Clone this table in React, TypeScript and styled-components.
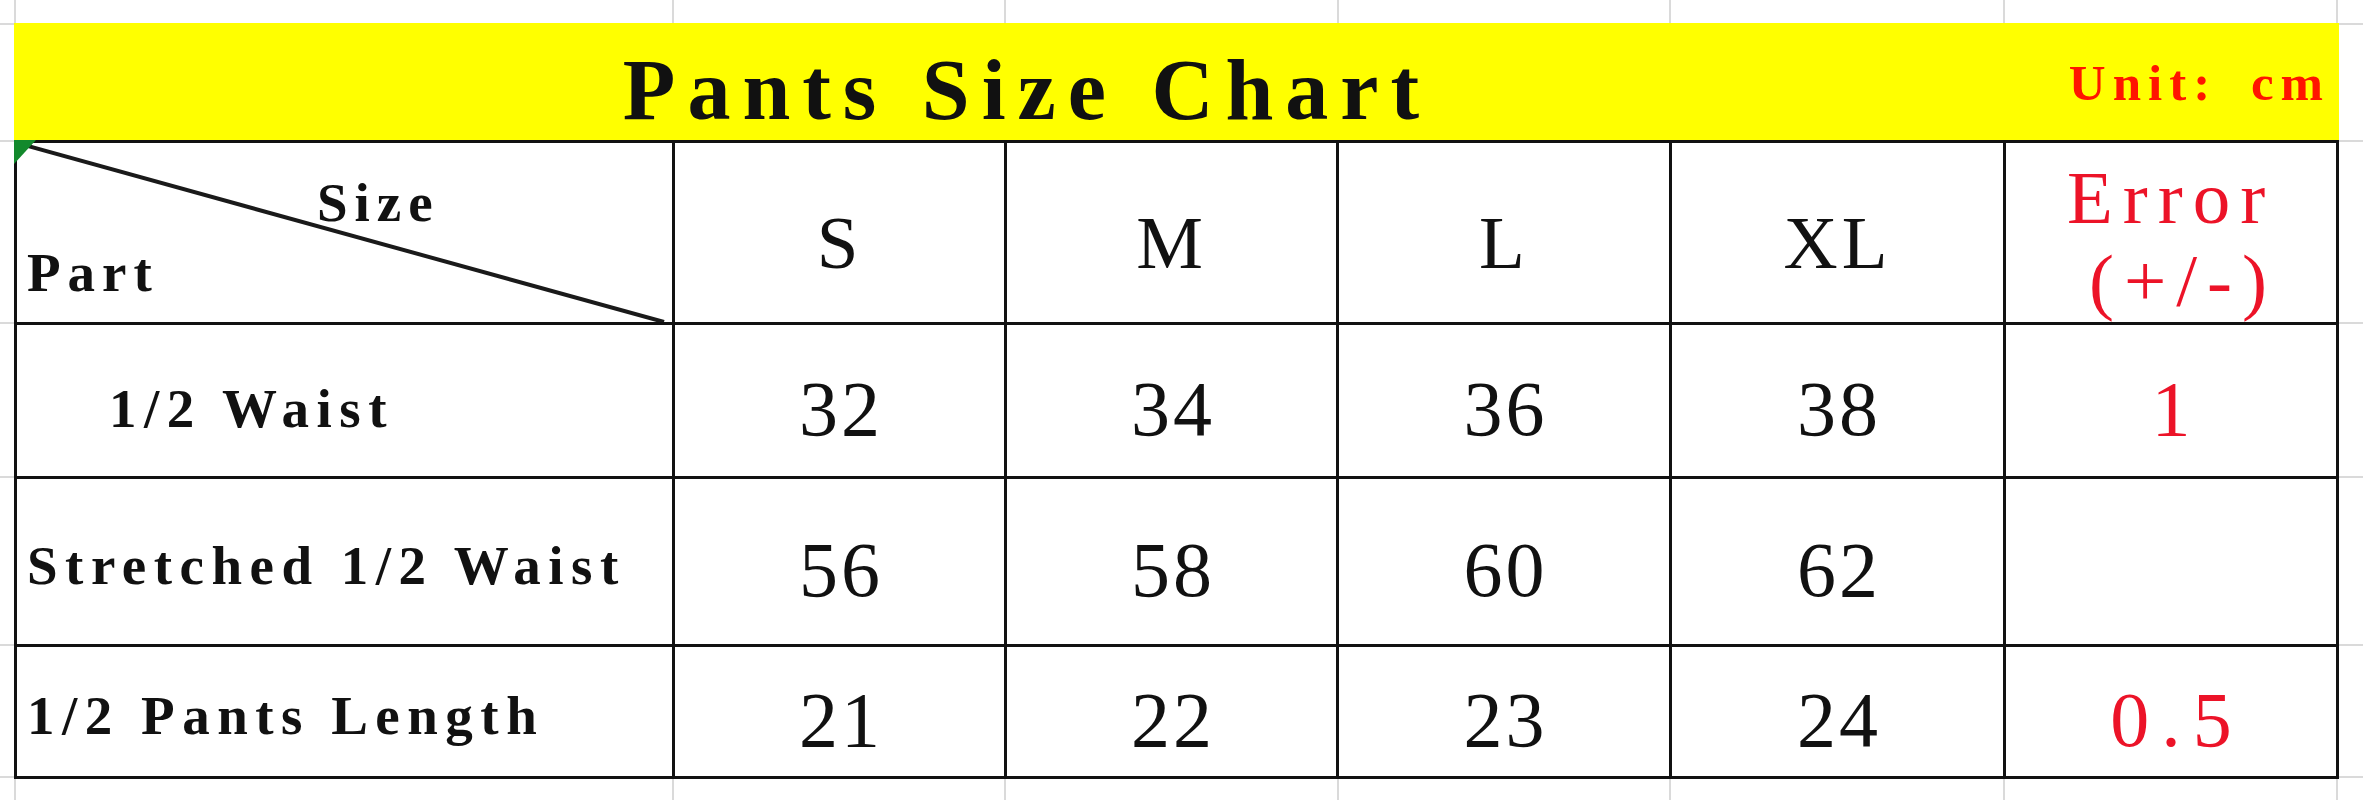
import React from 'react'
import styled, { createGlobalStyle } from 'styled-components'

const GlobalStyle = createGlobalStyle`
  html, body {
    margin: 0;
    padding: 0;
    background: #ffffff;
  }
  body {
    font-family: 'Liberation Serif', 'Times New Roman', serif;
    color: #111111;
  }
`

// faint spreadsheet grid lines that show round the table
const gridCols = [14, 672, 1004, 1337, 1669, 2003, 2336]
const gridRows = [23, 140, 322, 476, 644, 776]
const gridLine = 'linear-gradient(#dadada, #dadada)'
const gridImages = [...gridCols, ...gridRows].map(() => gridLine).join(', ')
const gridPositions = [
  ...gridCols.map((x) => `${x}px 0`),
  ...gridRows.map((y) => `0 ${y}px`),
].join(', ')
const gridSizes = [
  ...gridCols.map(() => '2px 100%'),
  ...gridRows.map(() => '100% 2px'),
].join(', ')

const RED = '#ec1328'

const sizes = ['S', 'M', 'L', 'XL']

const rows = [
  { label: '1/2 Waist', indent: 92, shift: 15, values: ['32', '34', '36', '38'], error: '1' },
  { label: 'Stretched 1/2 Waist', indent: 10, shift: 8, values: ['56', '58', '60', '62'], error: '' },
  { label: '1/2 Pants Length', indent: 10, shift: 8, values: ['21', '22', '23', '24'], error: '0.5' },
]

const App = () => {
  return (
    <Page>
      <GlobalStyle />
      <Sheet>
        <Banner>
          <Title>Pants Size Chart</Title>
          <Unit>Unit: cm</Unit>
        </Banner>
        <Table>
          <Corner>
            <Diagonal viewBox="0 0 655 179" preserveAspectRatio="none">
              <line
                x1="0"
                y1="0"
                x2="647"
                y2="179"
                stroke="#1a1a1a"
                strokeWidth="4"
                vectorEffect="non-scaling-stroke"
              />
            </Diagonal>
            <Marker />
            <CornerText $left={300}>Size</CornerText>
            <CornerText $left={10}>Part</CornerText>
          </Corner>
          {sizes.map((s) => (
            <SizeCell key={s}>{s}</SizeCell>
          ))}
          <ErrorHead>
            <span>Error</span>
            <ErrorSign>(+/-)</ErrorSign>
          </ErrorHead>

          {rows.map((r) => (
            <React.Fragment key={r.label}>
              <LabelCell $indent={r.indent} $shift={r.shift}>
                {r.label}
              </LabelCell>
              {r.values.map((v, i) => (
                <ValueCell key={i}>{v}</ValueCell>
              ))}
              <ValueCell $red $spacing={r.error === '0.5' ? 12 : 3}>
                {r.error}
              </ValueCell>
            </React.Fragment>
          ))}
        </Table>
      </Sheet>
    </Page>
  )
}

const Page = styled.div`
  width: 2363px;
  height: 800px;
  box-sizing: border-box;
  padding: 23px 0 0 14px;
  background-color: #ffffff;
  background-image: ${gridImages};
  background-position: ${gridPositions};
  background-size: ${gridSizes};
  background-repeat: no-repeat;
  overflow: hidden;
`

const Sheet = styled.div`
  width: 2325px;
  display: flex;
  flex-direction: column;
`

const Banner = styled.div`
  display: grid;
  grid-template-columns: 1989px 336px;
  height: 117px;
  background: #ffff00;
`

const Title = styled.div`
  padding: 24px 0 0 37px;
  text-align: center;
  font-size: 86px;
  line-height: 1;
  font-weight: 700;
  letter-spacing: 12px;
  color: #111;
  white-space: nowrap;
`

const Unit = styled.div`
  padding: 35px 9px 0 0;
  text-align: right;
  font-size: 51px;
  line-height: 1;
  font-weight: 700;
  letter-spacing: 7px;
  word-spacing: 14px;
  color: #ff1500;
  white-space: nowrap;
`

const Table = styled.div`
  display: grid;
  grid-template-columns: 655px 329px 329px 330px 331px 330px;
  grid-template-rows: 179px 151px 165px 129px;
  gap: 3px;
  padding: 3px;
  background: #111;
`

const Cell = styled.div`
  background: #ffffff;
  display: flex;
  align-items: center;
  box-sizing: border-box;
  white-space: nowrap;
`

const Corner = styled(Cell)`
  position: relative;
  flex-direction: column;
  align-items: flex-start;
  padding-top: 25px;
`

const Diagonal = styled.svg`
  position: absolute;
  inset: 0;
  width: 100%;
  height: 100%;
`

const Marker = styled.div`
  position: absolute;
  top: -3px;
  left: -3px;
  width: 0;
  height: 0;
  border-top: 24px solid #12892c;
  border-right: 22px solid transparent;
`

const CornerText = styled.div<{ $left: number }>`
  position: relative;
  padding-left: ${(p) => p.$left}px;
  font-size: 55px;
  line-height: 70px;
  font-weight: 700;
  letter-spacing: 7px;
`

const SizeCell = styled(Cell)`
  justify-content: center;
  padding-top: 20px;
  font-size: 75px;
  line-height: 1;
  font-weight: 400;
  letter-spacing: 4px;
`

const ErrorHead = styled(Cell)`
  flex-direction: column;
  justify-content: center;
  padding-top: 12px;
  font-size: 75px;
  line-height: 83px;
  letter-spacing: 10px;
  color: ${RED};
`

const ErrorSign = styled.span`
  padding-left: 24px;
`

const LabelCell = styled(Cell)<{ $indent: number; $shift: number }>`
  padding-left: ${(p) => p.$indent}px;
  padding-top: ${(p) => p.$shift}px;
  font-size: 55px;
  line-height: 1;
  font-weight: 700;
  letter-spacing: 7.5px;
`

const ValueCell = styled(Cell)<{ $red?: boolean; $spacing?: number }>`
  justify-content: center;
  padding-top: 16px;
  padding-left: ${(p) => p.$spacing ?? 3}px;
  font-size: 78px;
  line-height: 1;
  letter-spacing: ${(p) => p.$spacing ?? 3}px;
  color: ${(p) => (p.$red ? RED : '#111')};
`

export default App
